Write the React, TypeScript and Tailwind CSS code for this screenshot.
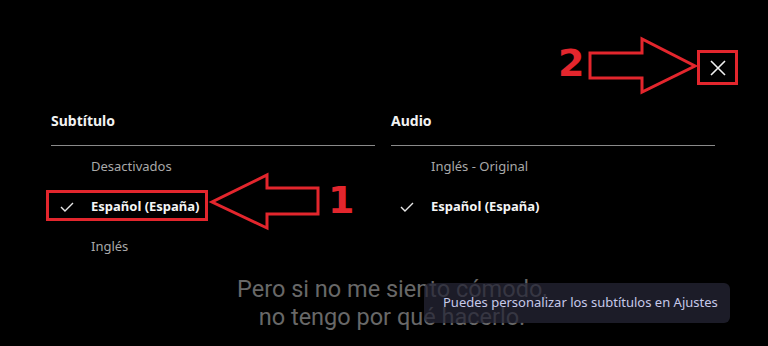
import React from "react";

const Check = () => (
  <svg width="14" height="10" viewBox="0 0 14 10" className="shrink-0">
    <polyline points="1,5 5,9 13,1" fill="none" stroke="#e8e8e8" strokeWidth="1.4" />
  </svg>
);

type Item = { label: string; selected?: boolean };

const Column = ({ title, items }: { title: string; items: Item[] }) => (
  <div className="w-[324px] flex flex-col">
    <div className="h-[35px] border-b border-[#8a8a8a] text-[14px] leading-5 font-bold text-[#f2f2f2]">{title}</div>
    {items.map((it) => (
      <div key={it.label} className="h-10 flex items-center pt-[2px]">
        <div className="w-10 flex justify-start pl-[9px]">{it.selected ? <Check /> : null}</div>
        <span
          className={
            it.selected
              ? "text-[13px] font-bold text-[#f5f5f5]"
              : "text-[13px] text-[#a9a9a9]"
          }
        >
          {it.label}
        </span>
      </div>
    ))}
  </div>
);

export default function App() {
  return (
    <div
      className="relative w-[768px] h-[346px] bg-black overflow-hidden"
      style={{ fontFamily: '"Noto Sans", Inter, sans-serif' }}
    >
      <div className="flex justify-end pt-[50px] pr-[31px]">
        <button className="w-[38px] h-9 flex items-center justify-center">
          <svg width="16" height="16" viewBox="0 0 16 16">
            <path d="M1 1 L15 15 M15 1 L1 15" stroke="#f0f0f0" strokeWidth="1.6" />
          </svg>
        </button>
      </div>

      <div className="flex gap-4 pl-[51px] mt-[25px]">
        <Column
          title="Subtítulo"
          items={[{ label: "Desactivados" }, { label: "Español (España)", selected: true }, { label: "Inglés" }]}
        />
        <Column
          title="Audio"
          items={[{ label: "Inglés - Original" }, { label: "Español (España)", selected: true }]}
        />
      </div>

      <div
        className="absolute left-0 right-0 top-[275px] pl-[16px] text-center text-[23.5px] leading-7 font-normal text-[#686868]"
        style={{ fontFamily: "Roboto, sans-serif" }}
      >
        <div>Pero si no me siento cómodo,</div>
        <div>no tengo por qué hacerlo.</div>
      </div>

      <div className="absolute left-[424px] top-[283px] w-[306px] h-10 rounded-md bg-[#262635]/75 flex items-center pl-[19px]">
        <span className="text-[13px] text-[#c6c9ea]">Puedes personalizar los subtítulos en Ajustes</span>
      </div>

      <svg className="absolute left-0 top-0 pointer-events-none" width="768" height="346" viewBox="0 0 768 346">
        <g fill="none" stroke="#e3262d" strokeWidth="3" strokeLinejoin="miter">
          <rect x="698.5" y="51.5" width="38" height="32" />
          <polygon points="590,53 642,53 642,39 695,66 642,92 642,78 590,78" />
          <rect x="47.5" y="191.5" width="159" height="28" />
          <polygon points="318,188 267,188 267,175 212,202 267,228 267,214 318,214" />
        </g>
      </svg>
      <div
        className="absolute left-[558px] top-[40px] text-[38px] leading-[46px] font-bold text-[#e3262d]"
        style={{ fontFamily: '"DejaVu Sans", sans-serif' }}
      >
        2
      </div>
      <div
        className="absolute left-[328px] top-[177px] text-[38px] leading-[46px] font-bold text-[#e3262d]"
        style={{ fontFamily: '"DejaVu Sans", sans-serif' }}
      >
        1
      </div>
    </div>
  );
}
